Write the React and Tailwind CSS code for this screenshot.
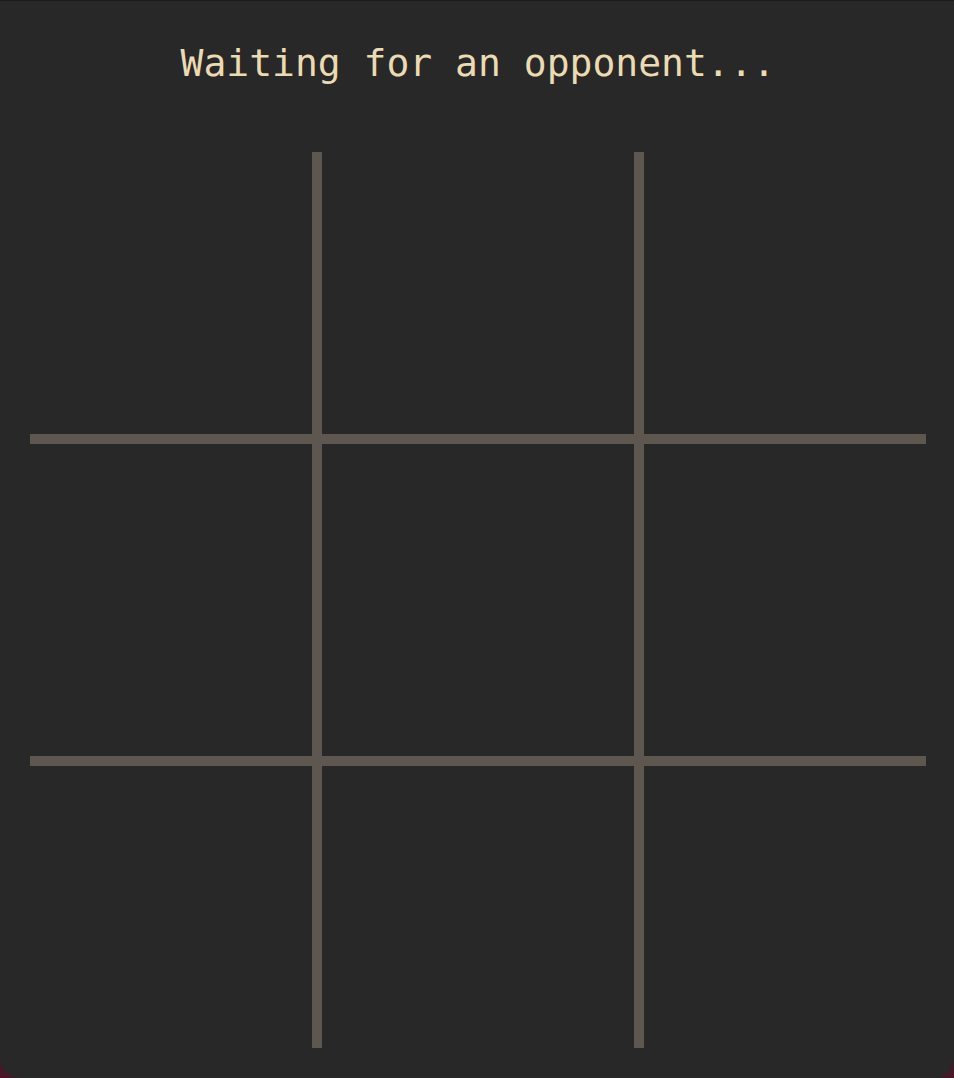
const cells = [0, 1, 2, 3, 4, 5, 6, 7, 8];

const cellBorder = (i) => {
  const row = Math.floor(i / 3);
  const col = i % 3;
  const classes = [];
  if (col === 1) classes.push('border-x-[10px]');
  if (row === 1) classes.push('border-y-[10px]');
  return classes.join(' ');
};

export default function App() {
  return (
    <div className="min-h-screen bg-[#4a1526]">
      <div className="h-[1078px] rounded-b-[20px] border-t border-[#1b1b1b] bg-[#282828] flex flex-col items-center">
        <h1 className="mt-[38px] ml-[2px] text-[38px] leading-[48px] text-[#ebdbb2] font-['DejaVu_Sans_Mono',monospace]">
          Waiting for an opponent...
        </h1>
        <div className="mt-[65px] ml-[2px] grid grid-cols-[282px_332px_282px] grid-rows-[282px_332px_282px] bg-[#5d574f]">
          {cells.map((i) => (
            <div key={i} className={`bg-[#282828] border-[#5d574f] ${cellBorder(i)}`} />
          ))}
        </div>
      </div>
    </div>
  );
}
